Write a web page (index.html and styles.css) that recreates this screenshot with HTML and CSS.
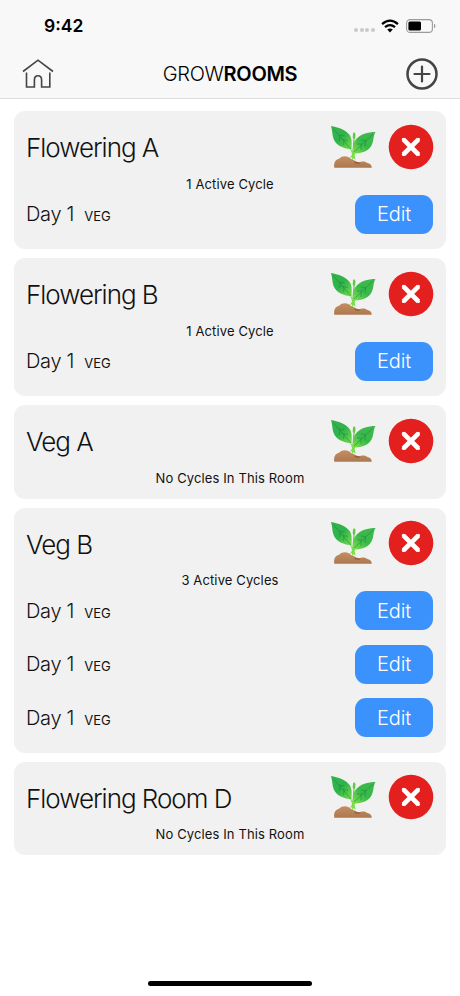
FILE: index.html
```html
<!DOCTYPE html>
<html lang="en">
<head>
<meta charset="utf-8">
<title>Growrooms</title>
<link rel="stylesheet" href="styles.css">
</head>
<body>
<svg class="sprites" aria-hidden="true">
  <defs>
    <linearGradient id="leaf-left" x1="0" y1="0" x2="1" y2="1"><stop offset="0" stop-color="#35b34c"/><stop offset=".5" stop-color="#2fb34a"/><stop offset="1" stop-color="#7bdc4c"/></linearGradient>
    <linearGradient id="leaf-right" x1="1" y1="0" x2="0" y2="1"><stop offset="0" stop-color="#3fb84c"/><stop offset=".55" stop-color="#39b94a"/><stop offset="1" stop-color="#84e04e"/></linearGradient>
    <linearGradient id="soil" x1="0" y1="0" x2="0" y2="1"><stop offset="0" stop-color="#c58e61"/><stop offset="1" stop-color="#ac784f"/></linearGradient>
    <symbol id="sprout" viewBox="0 0 46 44">
      <path fill="url(#soil)" d="M4.300 42.800C3.600 38 5 35 9 33.800C12 30.500 18 30.500 21 34C23.500 34.500 25 36.500 28.500 37.200C32 36 35.500 36 37.500 38C40.500 38.500 42 40.500 41.700 42.800Z"/>
      <path fill="#94643f" d="M24 36.500L29 37.200L30.500 39L25 38.500Z"/>
      <path fill="#62c946" d="M22.700 12.500L23 8.500L24.200 7L25.500 9L25.300 12.500L24.600 14L24.500 20L23.200 28H22.300L23.400 14Z"/>
      <path fill="url(#leaf-left)" d="M1 1C8 2.500 16 4.500 20 10.500C22.500 15 21.500 20 21.600 24.500C14 23.500 6.500 21 3.600 14C2.200 10.500 2.500 5.500 1 1Z"/>
      <path fill="url(#leaf-right)" d="M45.500 7C38 7 30 9 25.500 15C22.500 19.500 23.500 24 22.500 28.500C30 28.500 38 27 41.500 20.500C44 16 43 11 45.500 7Z"/>
      <path fill="none" stroke="#168541" stroke-opacity=".75" stroke-width=".7" d="M3 3.500L21 24M10 11L9.500 16M14 15.500L13.500 20M9 10L14.500 11M13 14.500L18 15.500M43 9L24 27M35.500 16L35 21.500M31 20L31 25M36 15.500L31 15M32 19L27 19"/>
      <path fill="#7ade4c" d="M19 22.500L22.200 25.500L23.500 28L26 26.500L24.600 30L25.600 35L23.500 33L22.500 35L21.800 32L19.700 33.500L22 29.500C21.700 26.500 20.700 24.500 19 22.500Z"/>
    </symbol>
    <symbol id="remove" viewBox="0 0 46 46">
      <circle cx="23" cy="23" r="22.300" fill="#e4201e"/>
      <path d="M15.300 15.300L30.500 30.500M30.500 15.300L15.300 30.500" stroke="#fff" stroke-width="4.600"/>
      <path d="M15.300 15.300L30.500 30.500M30.500 15.300L15.300 30.500" stroke="#fff" stroke-width="3" stroke-linecap="round"/>
    </symbol>
  </defs>
</svg>
<div class="phone">
  <header class="topbar">
    <div class="status">
      <span class="clock">9:42</span>
      <div class="signals">
        <span class="dots"><i></i><i></i><i></i><i></i></span>
        <svg class="wifi" viewBox="0 0 18 14"><g fill="none" stroke="#000" stroke-width="2.300"><path d="M1.100 5.100Q9 -1.800 16.900 5.100"/><path d="M4 8.200Q9 4 14 8.200"/></g><path d="M6.200 10.600Q9 8.500 11.800 10.600L9 13.400Z"/></svg>
        <svg class="battery" viewBox="0 0 30 14"><rect x=".6" y=".6" width="25.800" height="12.800" rx="3.500" fill="none" stroke="#9b9b9b" stroke-width="1.100"/><rect x="2.400" y="2.400" width="12.600" height="9.200" rx="1.500"/><path d="M28 4.700Q29.400 5.300 29.400 7T28 9.300Z" fill="#999"/></svg>
      </div>
    </div>
    <nav class="navbar">
      <svg class="home" viewBox="0 0 32 30"><path d="M1 12.500L16 1.200L31 12.500M4.500 13.500V28H12.400V21Q12.400 16.700 16 16.700T19.600 21V28H27.800V13.500" fill="none" stroke="#444" stroke-width="1.600"/></svg>
      <h1 class="title">GROW<b>ROOMS</b></h1>
      <svg class="add" viewBox="0 0 32 32"><g fill="none" stroke="#444" stroke-width="2.500"><circle cx="16" cy="16" r="14.500"/><path d="M16 8.500V23.500M8.500 16H23.500" stroke-width="2.200" stroke-linecap="round"/></g></svg>
    </nav>
  </header>
  <main class="rooms">
    <section class="room">
      <div class="head"><h2 class="name">Flowering A</h2><svg class="sprout"><use href="#sprout"/></svg><svg class="remove"><use href="#remove"/></svg></div>
      <p class="summary">1 Active Cycle</p>
      <div class="cycles"><div class="cycle"><span class="day">Day 1</span><span class="stage">VEG</span><button class="edit">Edit</button></div></div>
    </section>
    <section class="room">
      <div class="head"><h2 class="name">Flowering B</h2><svg class="sprout"><use href="#sprout"/></svg><svg class="remove"><use href="#remove"/></svg></div>
      <p class="summary">1 Active Cycle</p>
      <div class="cycles"><div class="cycle"><span class="day">Day 1</span><span class="stage">VEG</span><button class="edit">Edit</button></div></div>
    </section>
    <section class="room">
      <div class="head"><h2 class="name">Veg A</h2><svg class="sprout"><use href="#sprout"/></svg><svg class="remove"><use href="#remove"/></svg></div>
      <p class="summary">No Cycles In This Room</p>
    </section>
    <section class="room">
      <div class="head"><h2 class="name">Veg B</h2><svg class="sprout"><use href="#sprout"/></svg><svg class="remove"><use href="#remove"/></svg></div>
      <p class="summary">3 Active Cycles</p>
      <div class="cycles">
        <div class="cycle"><span class="day">Day 1</span><span class="stage">VEG</span><button class="edit">Edit</button></div>
        <div class="cycle"><span class="day">Day 1</span><span class="stage">VEG</span><button class="edit">Edit</button></div>
        <div class="cycle"><span class="day">Day 1</span><span class="stage">VEG</span><button class="edit">Edit</button></div>
      </div>
    </section>
    <section class="room">
      <div class="head"><h2 class="name">Flowering Room D</h2><svg class="sprout"><use href="#sprout"/></svg><svg class="remove"><use href="#remove"/></svg></div>
      <p class="summary">No Cycles In This Room</p>
    </section>
  </main>
  <div class="home-indicator"></div>
</div>
</body>
</html>
```
FILE: styles.css
```css
* { box-sizing: border-box; margin: 0; padding: 0; }
body { background: #fff; color: #111; font-family: Inter, "Liberation Sans", sans-serif; }
svg { display: block; flex: none; }
.sprites { position: absolute; width: 0; height: 0; }
.phone { width: 460px; height: 996px; display: flex; flex-direction: column; overflow: hidden; }

.topbar { height: 99px; background: #f8f8f8; border-bottom: 1px solid #dedede; }
.status { height: 51px; padding: 0 24px 0 44px; display: flex; align-items: center; justify-content: space-between; }
.clock { font-size: 17.500px; font-weight: 600; color: #000; }
.signals { display: flex; align-items: center; }
.dots { display: flex; gap: 1.500px; margin: 9px 6.500px 0 0; }
.dots i { width: 4px; height: 4px; border-radius: 50%; background: #c9c9c9; }
.wifi { width: 18px; height: 14px; margin-right: 7px; }
.battery { width: 30px; height: 14px; }
.navbar { height: 46px; padding: 0 22px; display: flex; align-items: center; justify-content: space-between; }
.home { width: 32px; height: 30px; }
.add { width: 32px; height: 32px; }
.title { font-size: 20px; font-weight: 300; color: #000; letter-spacing: -.3px; }
.title b { font-weight: 600; }

.rooms { flex: 1; padding: 12.400px 14px 0; display: flex; flex-direction: column; gap: 9px; }
.room { background: #f1f1f1; border-radius: 11px; padding: 13px 13px 12.100px; }
.head { height: 45px; display: flex; align-items: center; }
.name { flex: 1; margin-left: -1px; padding-top: 2px; font-size: 26px; font-weight: 300; letter-spacing: -1.020px; white-space: nowrap; }
.sprout { width: 46px; height: 44px; margin-right: 12px; }
.remove { width: 46px; height: 46px; margin-right: -1px; }
.summary { margin-top: 6.500px; height: 17px; line-height: 17px; font-size: 13px; text-align: center; letter-spacing: .12px; }
.cycles { margin: 2px 0 3.400px; display: flex; flex-direction: column; gap: 14.400px; }
.cycle { height: 39px; display: flex; align-items: center; }
.day { margin-left: -1px; font-size: 20px; font-weight: 300; letter-spacing: -.3px; }
.stage { flex: 1; margin: 4px 0 0 10px; font-size: 13px; }
.edit { width: 78px; height: 39px; border: 0; border-radius: 11px; background: #3c92fd; color: #fff; font: 300 20px Inter, sans-serif; letter-spacing: -.1px; }

.home-indicator { width: 164px; height: 5px; margin: 0 auto 10px; border-radius: 3px; background: #000; }
```
